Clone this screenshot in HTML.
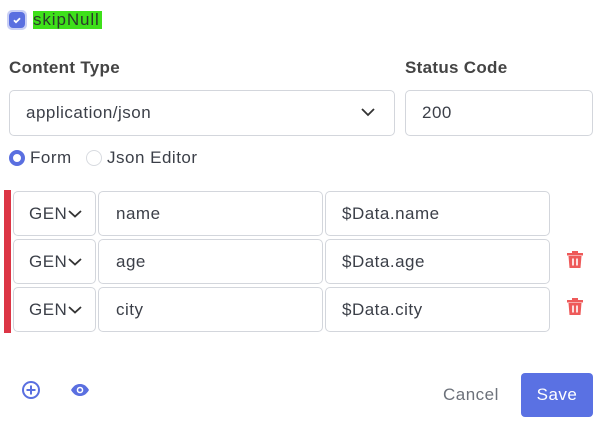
<!DOCTYPE html>
<html><head><style>
*{box-sizing:border-box;margin:0;padding:0}
body{width:606px;height:427px;background:#fff;font-family:"Liberation Sans",sans-serif;color:#3b3f48;position:relative;overflow:hidden;letter-spacing:.5px}
.a{position:absolute}
.box{position:absolute;border:1px solid #d3d6dc;border-radius:5px;font-size:17px;display:flex;align-items:center}
</style></head><body>
<div class="a" style="left:7px;top:10px;width:20px;height:20px;border-radius:5px;background:#c9cff5"></div>
<div class="a" style="left:9px;top:12px;width:16px;height:16px;border-radius:4px;background:#5a6fe0"></div>
<svg class="a" style="left:9px;top:12px" width="16" height="16"><path d="M5 8.2l2 2 4-4" stroke="#fff" stroke-width="1.8" fill="none"/></svg>
<div class="a" style="left:33px;top:11px;width:69px;height:18px;background:#3ee01a"></div>
<div class="a" style="left:33px;top:11px;font-size:17px;line-height:18px;color:#2a3a2a;letter-spacing:.9px">skipNull</div>
<div class="a" style="left:9px;top:58px;font-size:17px;font-weight:bold;color:#444;letter-spacing:.3px">Content Type</div>
<div class="a" style="left:405px;top:58px;font-size:17px;font-weight:bold;color:#444;letter-spacing:.3px">Status Code</div>
<div class="box" style="left:9px;top:90px;width:386px;height:46px;padding-left:16px">application/json</div>
<svg class="a" style="left:360px;top:106px" width="16" height="12"><path d="M2 3l6 6 6-6" stroke="#333" stroke-width="1.8" fill="none"/></svg>
<div class="box" style="left:405px;top:90px;width:188px;height:46px;padding-left:16px">200</div>
<div class="a" style="left:9px;top:150px;width:16px;height:16px;border-radius:50%;border:4px solid #5a6fe0"></div>
<div class="a" style="left:30px;top:148px;font-size:17px">Form</div>
<div class="a" style="left:86px;top:150px;width:16px;height:16px;border-radius:50%;border:1px solid #d8dbe0"></div>
<div class="a" style="left:107px;top:148px;font-size:17px">Json Editor</div>
<div class="a" style="left:4px;top:190px;width:7px;height:143px;background:#dc3545"></div>
<div class="box" style="left:13px;top:191px;width:83px;height:45px;padding-left:15px">GEN<svg width="16" height="10" style="margin-left:0"><path d="M2 2l6 5.5 6-5.5" stroke="#333" stroke-width="1.8" fill="none"/></svg></div>
<div class="box" style="left:98px;top:191px;width:225px;height:45px;padding-left:17px">name</div>
<div class="box" style="left:325px;top:191px;width:225px;height:45px;padding-left:16px">$Data.name</div>
<div class="box" style="left:13px;top:239px;width:83px;height:45px;padding-left:15px">GEN<svg width="16" height="10" style="margin-left:0"><path d="M2 2l6 5.5 6-5.5" stroke="#333" stroke-width="1.8" fill="none"/></svg></div>
<div class="box" style="left:98px;top:239px;width:225px;height:45px;padding-left:17px">age</div>
<div class="box" style="left:325px;top:239px;width:225px;height:45px;padding-left:16px">$Data.age</div>
<div class="box" style="left:13px;top:287px;width:83px;height:45px;padding-left:15px">GEN<svg width="16" height="10" style="margin-left:0"><path d="M2 2l6 5.5 6-5.5" stroke="#333" stroke-width="1.8" fill="none"/></svg></div>
<div class="box" style="left:98px;top:287px;width:225px;height:45px;padding-left:17px">city</div>
<div class="box" style="left:325px;top:287px;width:225px;height:45px;padding-left:16px">$Data.city</div>
<svg class="a" style="left:566px;top:250px" width="18" height="20"><path d="M1 3h16v2.5H1zM6 1h6v2H6z" fill="#ee5a5a"/><path d="M2.5 6h13l-1 12h-11z" fill="#ee5a5a"/><path d="M7 8.5v7M11 8.5v7" stroke="#fff" stroke-width="1.6"/></svg>
<svg class="a" style="left:566px;top:297px" width="18" height="20"><path d="M1 3h16v2.5H1zM6 1h6v2H6z" fill="#ee5a5a"/><path d="M2.5 6h13l-1 12h-11z" fill="#ee5a5a"/><path d="M7 8.5v7M11 8.5v7" stroke="#fff" stroke-width="1.6"/></svg>
<svg class="a" style="left:21px;top:380px" width="20" height="20"><circle cx="10" cy="10" r="8" stroke="#5a6fe0" stroke-width="2" fill="none"/><path d="M10 5.5v9M5.5 10h9" stroke="#5a6fe0" stroke-width="2"/></svg>
<svg class="a" style="left:70px;top:382px" width="20" height="16"><path d="M1 8C4 3 7 2 10 2s6 1 9 6c-3 5-6 6-9 6S4 13 1 8z" fill="#5a6fe0"/><circle cx="10" cy="8" r="3.3" fill="#fff"/><circle cx="10" cy="8" r="1.8" fill="#5a6fe0"/></svg>
<div class="a" style="left:443px;top:385px;font-size:17px;color:#6c717a">Cancel</div>
<div class="a" style="left:521px;top:373px;width:72px;height:44px;border-radius:4px;background:#5a71e3;color:#fff;font-size:17px;display:flex;align-items:center;justify-content:center">Save</div>
</body></html>
